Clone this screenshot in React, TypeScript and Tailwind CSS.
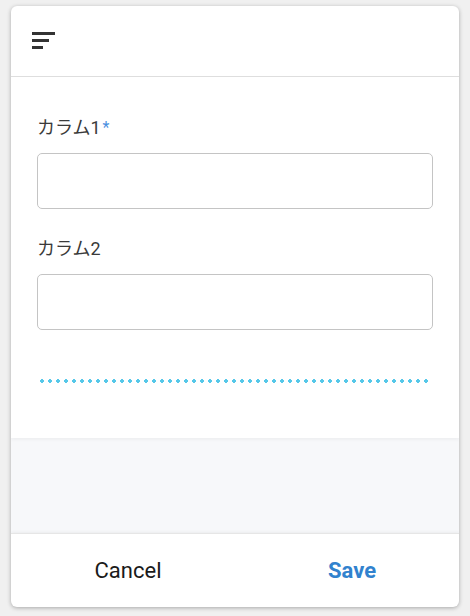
import React from 'react'

const jp = { fontFamily: 'Roboto, "Noto Sans CJK JP", sans-serif' }

const SortIcon = () => (
    <svg width="24" height="20" viewBox="0 0 24 20" className="text-[#333]">
        <rect x="0" y="0" width="23" height="3" fill="currentColor" />
        <rect x="0" y="7" width="17" height="3" fill="currentColor" />
        <rect x="0" y="14" width="11" height="3" fill="currentColor" />
    </svg>
)

const Field = ({ label, required }: { label: string; required?: boolean }) => (
    <div className="flex flex-col">
        <label className="text-[18px] leading-6 text-[#3a3a3a]" style={jp}>
            {label}
            {required && <span className="text-[#4a8fe0] text-[16px] align-top ml-[2px]">*</span>}
        </label>
        <input className="mt-[13px] h-[56px] w-full rounded-[5px] border border-[#c4c4c4] bg-white px-3 outline-none" />
    </div>
)

export default function App() {
    return (
        <div className="w-[470px] h-[616px] bg-[#f0f0f0] pt-[6px] px-[11px]" style={jp}>
            <div className="w-[448px] h-[601px] bg-white rounded-md shadow-[0_1px_4px_rgba(0,0,0,0.3)] flex flex-col overflow-hidden">
                <div className="h-[71px] shrink-0 border-b border-[#dedede] flex items-center pl-[21px] pt-[1px]">
                    <SortIcon />
                </div>
                <div className="bg-white px-[26px] pt-[39px] pb-[55px] flex flex-col shadow-[0_2px_3px_rgba(0,0,0,0.04)] relative">
                    <Field label="カラム1" required />
                    <div className="mt-[28px]">
                        <Field label="カラム2" />
                    </div>
                    <div className="mt-[49px] ml-[1px] h-[4px] w-[394px] bg-[radial-gradient(circle,#56c8e9_1.6px,transparent_1.8px)] bg-[length:8px_4px] bg-repeat-x" />
                </div>
                <div className="flex-1 bg-[#f7f8fa]" />
                <div className="h-[74px] shrink-0 border-t border-[#e6e6e6] shadow-[0_-1px_3px_rgba(0,0,0,0.05)] flex">
                    <button className="flex-1 pl-[10px] text-[22px] text-[#1a1a1a]" style={{ fontFamily: 'Roboto, sans-serif' }}>
                        Cancel
                    </button>
                    <button className="flex-1 pl-[10px] text-[22px] font-bold text-[#3182ce]" style={{ fontFamily: 'Roboto, sans-serif' }}>
                        Save
                    </button>
                </div>
            </div>
        </div>
    )
}
